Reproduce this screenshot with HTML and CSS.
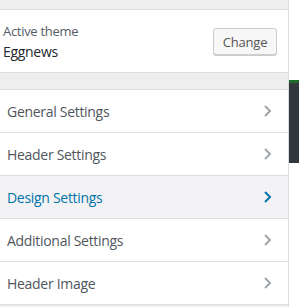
FILE: index.html
```html
<!DOCTYPE html>
<html lang="en">
<head>
  <meta charset="UTF-8">
  <meta name="viewport" content="width=device-width, initial-scale=1.0">
  <title>Customize</title>
  <link rel="stylesheet" href="styles.css">
</head>
<body>
  <div class="layout">
    <div class="painel">
      <div class="faixa-topo"></div>

      <div class="tema-ativo">
        <div class="tema-info">
          <span class="tema-rotulo">Active theme</span>
          <span class="tema-nome">Eggnews</span>
        </div>
        <button class="btn-trocar">Change</button>
      </div>

      <div class="faixa"></div>

      <ul class="secoes">
        <li class="secao">General Settings <svg class="seta" viewBox="0 0 8 12"><path d="M1 1l5 5-5 5"/></svg></li>
        <li class="secao">Header Settings <svg class="seta" viewBox="0 0 8 12"><path d="M1 1l5 5-5 5"/></svg></li>
        <li class="secao ativa">Design Settings <svg class="seta" viewBox="0 0 8 12"><path d="M1 1l5 5-5 5"/></svg></li>
        <li class="secao">Additional Settings <svg class="seta" viewBox="0 0 8 12"><path d="M1 1l5 5-5 5"/></svg></li>
        <li class="secao">Header Image <svg class="seta" viewBox="0 0 8 12"><path d="M1 1l5 5-5 5"/></svg></li>
      </ul>
    </div>

    <div class="preview">
      <div class="preview-bloco"></div>
    </div>
  </div>
</body>
</html>
```

FILE: styles.css
```css
/* Painel do customizador */
body {
  margin: 0;
  font-family: 'Open Sans', sans-serif;
  background: #fff;
  color: #4f565d;
  letter-spacing: -0.3px;
}

.layout {
  display: flex;
  height: 307px;
  overflow: hidden;
}

.painel {
  width: 288px;
  flex-shrink: 0;
  border-right: 1px solid #ddd;
  background: #eee;
}

.faixa-topo {
  height: 9px;
  border-bottom: 1px solid #ddd;
}

.tema-ativo {
  height: 62px;
  background: #fff;
  border-bottom: 1px solid #ddd;
  display: flex;
  align-items: center;
  justify-content: space-between;
  padding: 0 11px 0 3px;
}

.tema-info {
  display: flex;
  flex-direction: column;
  margin-top: 2px;
}

.tema-rotulo {
  font-size: 13px;
  line-height: 20px;
  color: #555d66;
}

.tema-nome {
  font-size: 14px;
  line-height: 22px;
  color: #23282d;
}

.btn-trocar {
  font-family: inherit;
  font-size: 13px;
  letter-spacing: -0.2px;
  color: #555;
  background: #f7f7f7;
  border: 1px solid #ccc;
  border-radius: 3px;
  box-shadow: 0 1px 0 #ccc;
  width: 64px;
  height: 27px;
  padding: 0;
  margin-top: 1px;
  cursor: pointer;
}

.faixa {
  height: 16px;
  border-bottom: 1px solid #ddd;
}

.secoes {
  list-style: none;
  margin: 0;
  padding: 0;
}

.secao {
  display: flex;
  align-items: center;
  justify-content: space-between;
  height: 42px;
  padding: 0 16px 0 7px;
  background: #fff;
  border-bottom: 1px solid #ddd;
  font-size: 14px;
  color: #4f565d;
}

.secao.ativa {
  background: #f3f3f5;
  color: #0073aa;
}

.seta {
  width: 8px;
  height: 12px;
  fill: none;
  stroke: #a0a5aa;
  stroke-width: 2;
}

.secao.ativa .seta {
  stroke: #0073aa;
}

.preview {
  flex: 1;
  padding-top: 80px;
}

.preview-bloco {
  height: 80px;
  background: #32373c;
  border-top: 3px solid #1e6b2a;
}
```
